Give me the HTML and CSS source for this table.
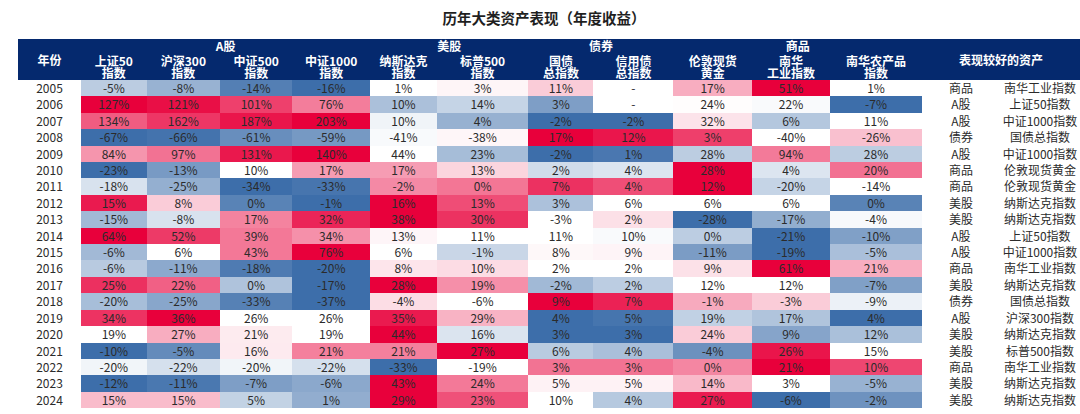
FILE: index.html
```html
<!DOCTYPE html>
<html lang="zh-CN">
<head>
<meta charset="utf-8">
<title>历年大类资产表现（年度收益）</title>
<link rel="stylesheet" href="styles.css">
</head>
<body>
<div class="page">
  <h1 class="title">历年大类资产表现（年度收益）</h1>
  <table class="heat">
    <colgroup>
      <col class="c-year"><col class="c1"><col class="c2"><col class="c3"><col class="c4">
      <col class="c5"><col class="c6"><col class="c7"><col class="c8">
      <col class="c9"><col class="c10"><col class="c11">
      <col class="c-cat"><col class="c-name">
    </colgroup>
    <thead>
      <tr class="grp">
        <th rowspan="2" class="lbl">年份</th>
        <th colspan="4">A股</th>
        <th colspan="2">美股</th>
        <th colspan="2">债券</th>
        <th colspan="3">商品</th>
        <th rowspan="2" colspan="2" class="lbl">表现较好的资产</th>
      </tr>
      <tr class="cols">
        <th>上证50<br>指数</th>
        <th>沪深300<br>指数</th>
        <th>中证500<br>指数</th>
        <th>中证1000<br>指数</th>
        <th>纳斯达克<br>指数</th>
        <th>标普500<br>指数</th>
        <th>国债<br>总指数</th>
        <th>信用债<br>总指数</th>
        <th>伦敦现货<br>黄金</th>
        <th>南华<br>工业指数</th>
        <th>南华农产品<br>指数</th>
      </tr>
    </thead>
    <tbody>
      <tr><td class="yr">2005</td><td class="v">-5%</td><td class="v">-8%</td><td class="v">-14%</td><td class="v">-16%</td><td class="v">1%</td><td class="v">3%</td><td class="v">11%</td><td class="v">-</td><td class="v">17%</td><td class="v">51%</td><td class="v">1%</td><td class="cat">商品</td><td class="nm">南华工业指数</td></tr>
      <tr><td class="yr">2006</td><td class="v">127%</td><td class="v">121%</td><td class="v">101%</td><td class="v">76%</td><td class="v">10%</td><td class="v">14%</td><td class="v">3%</td><td class="v">-</td><td class="v">24%</td><td class="v">22%</td><td class="v">-7%</td><td class="cat">A股</td><td class="nm">上证50指数</td></tr>
      <tr><td class="yr">2007</td><td class="v">134%</td><td class="v">162%</td><td class="v">187%</td><td class="v">203%</td><td class="v">10%</td><td class="v">4%</td><td class="v">-2%</td><td class="v">-2%</td><td class="v">32%</td><td class="v">6%</td><td class="v">11%</td><td class="cat">A股</td><td class="nm">中证1000指数</td></tr>
      <tr><td class="yr">2008</td><td class="v">-67%</td><td class="v">-66%</td><td class="v">-61%</td><td class="v">-59%</td><td class="v">-41%</td><td class="v">-38%</td><td class="v">17%</td><td class="v">12%</td><td class="v">3%</td><td class="v">-40%</td><td class="v">-26%</td><td class="cat">债券</td><td class="nm">国债总指数</td></tr>
      <tr><td class="yr">2009</td><td class="v">84%</td><td class="v">97%</td><td class="v">131%</td><td class="v">140%</td><td class="v">44%</td><td class="v">23%</td><td class="v">-2%</td><td class="v">1%</td><td class="v">28%</td><td class="v">94%</td><td class="v">28%</td><td class="cat">A股</td><td class="nm">中证1000指数</td></tr>
      <tr><td class="yr">2010</td><td class="v">-23%</td><td class="v">-13%</td><td class="v">10%</td><td class="v">17%</td><td class="v">17%</td><td class="v">13%</td><td class="v">2%</td><td class="v">4%</td><td class="v">28%</td><td class="v">4%</td><td class="v">20%</td><td class="cat">商品</td><td class="nm">伦敦现货黄金</td></tr>
      <tr><td class="yr">2011</td><td class="v">-18%</td><td class="v">-25%</td><td class="v">-34%</td><td class="v">-33%</td><td class="v">-2%</td><td class="v">0%</td><td class="v">7%</td><td class="v">4%</td><td class="v">12%</td><td class="v">-20%</td><td class="v">-14%</td><td class="cat">商品</td><td class="nm">伦敦现货黄金</td></tr>
      <tr><td class="yr">2012</td><td class="v">15%</td><td class="v">8%</td><td class="v">0%</td><td class="v">-1%</td><td class="v">16%</td><td class="v">13%</td><td class="v">3%</td><td class="v">6%</td><td class="v">6%</td><td class="v">6%</td><td class="v">0%</td><td class="cat">美股</td><td class="nm">纳斯达克指数</td></tr>
      <tr><td class="yr">2013</td><td class="v">-15%</td><td class="v">-8%</td><td class="v">17%</td><td class="v">32%</td><td class="v">38%</td><td class="v">30%</td><td class="v">-3%</td><td class="v">2%</td><td class="v">-28%</td><td class="v">-17%</td><td class="v">-4%</td><td class="cat">美股</td><td class="nm">纳斯达克指数</td></tr>
      <tr><td class="yr">2014</td><td class="v">64%</td><td class="v">52%</td><td class="v">39%</td><td class="v">34%</td><td class="v">13%</td><td class="v">11%</td><td class="v">11%</td><td class="v">10%</td><td class="v">0%</td><td class="v">-21%</td><td class="v">-10%</td><td class="cat">A股</td><td class="nm">上证50指数</td></tr>
      <tr><td class="yr">2015</td><td class="v">-6%</td><td class="v">6%</td><td class="v">43%</td><td class="v">76%</td><td class="v">6%</td><td class="v">-1%</td><td class="v">8%</td><td class="v">9%</td><td class="v">-11%</td><td class="v">-19%</td><td class="v">-5%</td><td class="cat">A股</td><td class="nm">中证1000指数</td></tr>
      <tr><td class="yr">2016</td><td class="v">-6%</td><td class="v">-11%</td><td class="v">-18%</td><td class="v">-20%</td><td class="v">8%</td><td class="v">10%</td><td class="v">2%</td><td class="v">2%</td><td class="v">9%</td><td class="v">61%</td><td class="v">21%</td><td class="cat">商品</td><td class="nm">南华工业指数</td></tr>
      <tr><td class="yr">2017</td><td class="v">25%</td><td class="v">22%</td><td class="v">0%</td><td class="v">-17%</td><td class="v">28%</td><td class="v">19%</td><td class="v">-2%</td><td class="v">2%</td><td class="v">12%</td><td class="v">12%</td><td class="v">-7%</td><td class="cat">美股</td><td class="nm">纳斯达克指数</td></tr>
      <tr><td class="yr">2018</td><td class="v">-20%</td><td class="v">-25%</td><td class="v">-33%</td><td class="v">-37%</td><td class="v">-4%</td><td class="v">-6%</td><td class="v">9%</td><td class="v">7%</td><td class="v">-1%</td><td class="v">-3%</td><td class="v">-9%</td><td class="cat">债券</td><td class="nm">国债总指数</td></tr>
      <tr><td class="yr">2019</td><td class="v">34%</td><td class="v">36%</td><td class="v">26%</td><td class="v">26%</td><td class="v">35%</td><td class="v">29%</td><td class="v">4%</td><td class="v">5%</td><td class="v">19%</td><td class="v">17%</td><td class="v">4%</td><td class="cat">A股</td><td class="nm">沪深300指数</td></tr>
      <tr><td class="yr">2020</td><td class="v">19%</td><td class="v">27%</td><td class="v">21%</td><td class="v">19%</td><td class="v">44%</td><td class="v">16%</td><td class="v">3%</td><td class="v">3%</td><td class="v">24%</td><td class="v">9%</td><td class="v">12%</td><td class="cat">美股</td><td class="nm">纳斯达克指数</td></tr>
      <tr><td class="yr">2021</td><td class="v">-10%</td><td class="v">-5%</td><td class="v">16%</td><td class="v">21%</td><td class="v">21%</td><td class="v">27%</td><td class="v">6%</td><td class="v">4%</td><td class="v">-4%</td><td class="v">26%</td><td class="v">15%</td><td class="cat">美股</td><td class="nm">标普500指数</td></tr>
      <tr><td class="yr">2022</td><td class="v">-20%</td><td class="v">-22%</td><td class="v">-20%</td><td class="v">-22%</td><td class="v">-33%</td><td class="v">-19%</td><td class="v">3%</td><td class="v">3%</td><td class="v">0%</td><td class="v">21%</td><td class="v">10%</td><td class="cat">商品</td><td class="nm">南华工业指数</td></tr>
      <tr><td class="yr">2023</td><td class="v">-12%</td><td class="v">-11%</td><td class="v">-7%</td><td class="v">-6%</td><td class="v">43%</td><td class="v">24%</td><td class="v">5%</td><td class="v">5%</td><td class="v">14%</td><td class="v">3%</td><td class="v">-5%</td><td class="cat">美股</td><td class="nm">纳斯达克指数</td></tr>
      <tr><td class="yr">2024</td><td class="v">15%</td><td class="v">15%</td><td class="v">5%</td><td class="v">1%</td><td class="v">29%</td><td class="v">23%</td><td class="v">10%</td><td class="v">4%</td><td class="v">27%</td><td class="v">-6%</td><td class="v">-2%</td><td class="cat">美股</td><td class="nm">纳斯达克指数</td></tr>
    </tbody>
  </table>
</div>
<script src="script.js"></script>
</body>
</html>
```

FILE: styles.css
```css
html, body {
  margin: 0;
  padding: 0;
  background: #ffffff;
}

body {
  font-family: "Noto Sans CJK SC", "Noto Sans", sans-serif;
  color: #2b2b2b;
}

.page {
  width: 1080px;
  height: 414px;
  overflow: hidden;
}

.title {
  margin: 0;
  height: 39px;
  padding-top: 8px;
  box-sizing: border-box;
  font-size: 14.5px;
  line-height: 20px;
  font-weight: 700;
  text-align: center;
  color: #1f1f1f;
  padding-left: 8px;
}

.heat {
  margin-left: 18px;
  border-collapse: collapse;
  border-spacing: 0;
  table-layout: fixed;
  width: 1062px;
  font-size: 12px;
}

.c-year { width: 63px; }
.c1 { width: 65.7px; }
.c2 { width: 73.3px; }
.c3 { width: 72.3px; }
.c4 { width: 77.7px; }
.c5 { width: 66.7px; }
.c6 { width: 91.6px; }
.c7 { width: 65px; }
.c8 { width: 80px; }
.c9 { width: 78.4px; }
.c10 { width: 78.3px; }
.c11 { width: 91.7px; }
.c-cat { width: 78px; }
.c-name { width: 80px; }

.heat thead th {
  background: #05296e;
  color: #ffffff;
  font-weight: 700;
  text-align: center;
  padding: 0;
  line-height: 12px;
  white-space: nowrap;
}

.heat .grp th {
  height: 14px;
  vertical-align: middle;
  padding-top: 0;
}

.heat .cols th {
  height: 27px;
  vertical-align: middle;
}

.heat td {
  padding: 0;
  height: 16.4px;
  line-height: 16.4px;
  text-align: center;
  white-space: nowrap;
  color: #2b2b2b;
}

.heat td.v {
  background: #ffffff;
}

.heat td.cat {
  padding-left: 0;
}
```

FILE: script.js
```js
(function () {
  var MIN = [61, 110, 170];
  var MID = [255, 255, 255];
  var MAX = [232, 0, 59];

  function mix(a, b, t) {
    return 'rgb(' + [0, 1, 2].map(function (i) {
      return Math.round(a[i] + (b[i] - a[i]) * t);
    }).join(',') + ')';
  }

  function median(sorted) {
    var r = 0.5 * (sorted.length - 1);
    var lo = Math.floor(r), hi = Math.ceil(r);
    return sorted[lo] + (sorted[hi] - sorted[lo]) * (r - lo);
  }

  var rows = document.querySelectorAll('.heat tbody tr');
  rows.forEach(function (row) {
    var cells = Array.prototype.slice.call(row.querySelectorAll('td.v'));
    var vals = [];
    cells.forEach(function (c) {
      var n = parseFloat(c.textContent);
      if (!isNaN(n)) vals.push(n);
    });
    var s = vals.slice().sort(function (a, b) { return a - b; });
    var mn = s[0], mx = s[s.length - 1], md = median(s);
    cells.forEach(function (c) {
      var n = parseFloat(c.textContent);
      if (isNaN(n)) return;
      var col;
      if (n <= md) {
        col = md === mn ? mix(MID, MID, 0) : mix(MID, MIN, (md - n) / (md - mn));
      } else {
        col = mix(MID, MAX, (n - md) / (mx - md));
      }
      c.style.backgroundColor = col;
    });
  });
})();
```
